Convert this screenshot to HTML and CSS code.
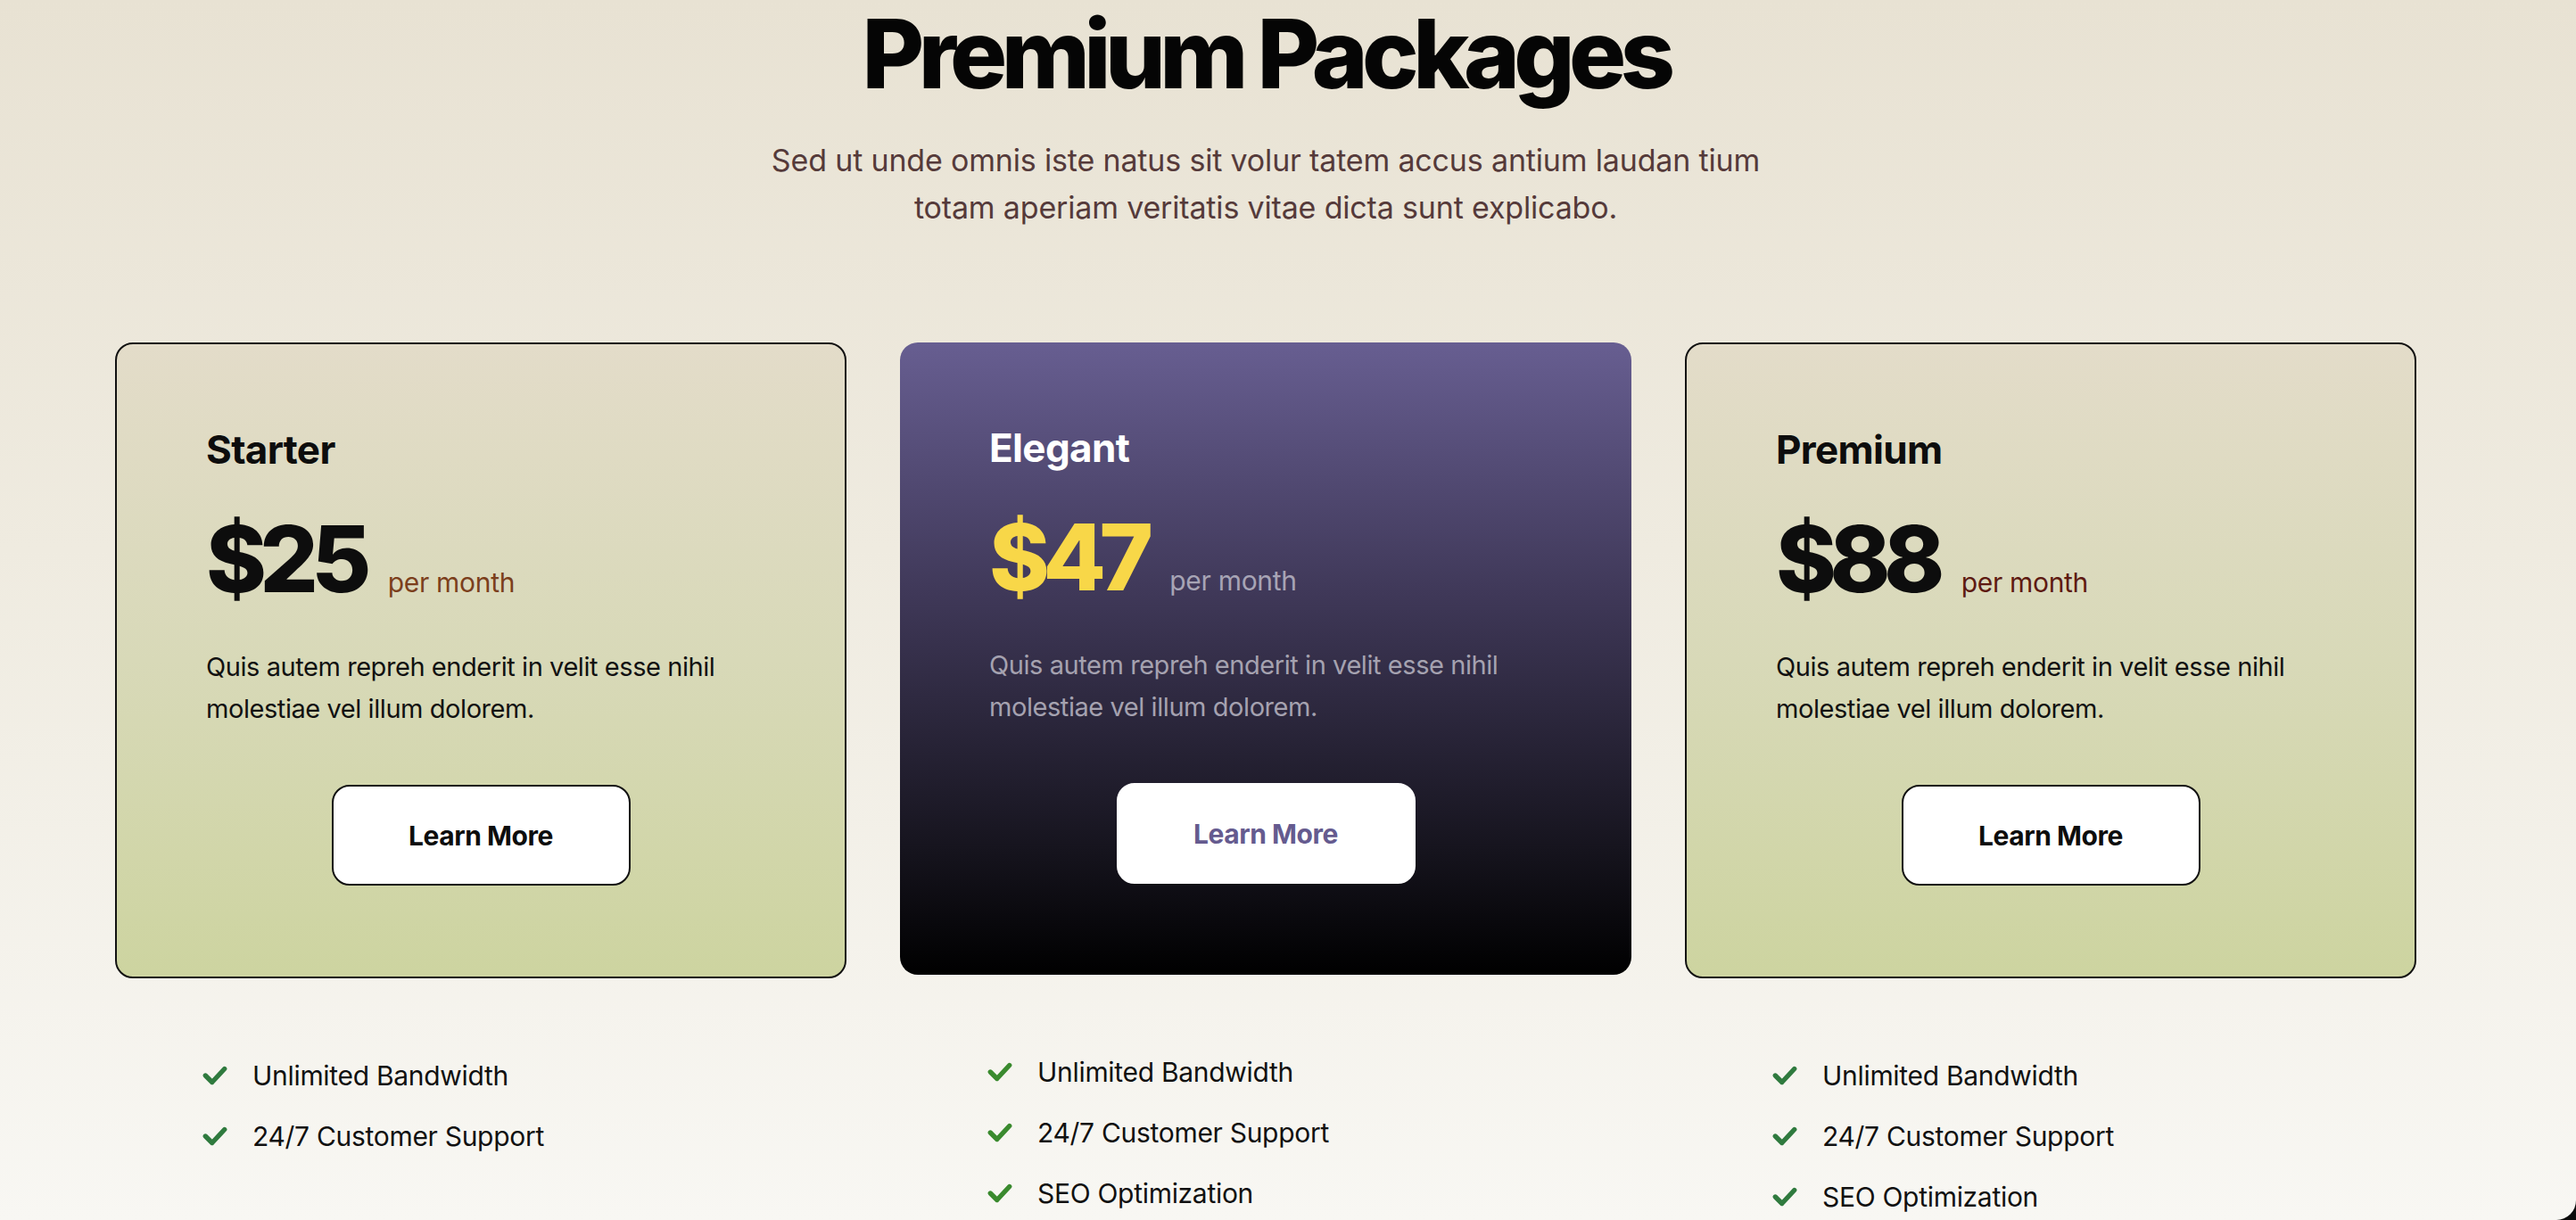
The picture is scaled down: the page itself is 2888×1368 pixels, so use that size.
FILE: index.html
```html
<!DOCTYPE html>
<html lang="en">
<head>
<meta charset="utf-8">
<title>Premium Packages</title>
<link rel="stylesheet" href="styles.css">
</head>
<body>
<main class="page">
  <header class="intro">
    <h1 class="intro__title">Premium Packages</h1>
    <p class="intro__text">Sed ut unde omnis iste natus sit volur tatem accus antium laudan tium totam aperiam veritatis vitae dicta sunt explicabo.</p>
  </header>

  <section class="plans">
    <div class="plan">
      <article class="card card--light">
        <h2 class="card__name">Starter</h2>
        <div class="card__price">
          <span class="card__amount">$25</span>
          <span class="card__period card__period--brown">per month</span>
        </div>
        <p class="card__desc">Quis autem repreh enderit in velit esse nihil molestiae vel illum dolorem.</p>
        <a class="card__btn" href="#">Learn More</a>
      </article>
      <ul class="features">
        <li class="features__item"><svg class="features__icon" viewBox="0 0 28 22"><polyline points="4,11 11,18 24,4"/></svg>Unlimited Bandwidth</li>
        <li class="features__item"><svg class="features__icon" viewBox="0 0 28 22"><polyline points="4,11 11,18 24,4"/></svg>24/7 Customer Support</li>
      </ul>
    </div>

    <div class="plan">
      <article class="card card--dark">
        <h2 class="card__name">Elegant</h2>
        <div class="card__price">
          <span class="card__amount">$47</span>
          <span class="card__period">per month</span>
        </div>
        <p class="card__desc">Quis autem repreh enderit in velit esse nihil molestiae vel illum dolorem.</p>
        <a class="card__btn" href="#">Learn More</a>
      </article>
      <ul class="features">
        <li class="features__item"><svg class="features__icon features__icon--bright" viewBox="0 0 28 22"><polyline points="4,11 11,18 24,4"/></svg>Unlimited Bandwidth</li>
        <li class="features__item"><svg class="features__icon features__icon--bright" viewBox="0 0 28 22"><polyline points="4,11 11,18 24,4"/></svg>24/7 Customer Support</li>
        <li class="features__item"><svg class="features__icon features__icon--bright" viewBox="0 0 28 22"><polyline points="4,11 11,18 24,4"/></svg>SEO Optimization</li>
      </ul>
    </div>

    <div class="plan">
      <article class="card card--light">
        <h2 class="card__name">Premium</h2>
        <div class="card__price">
          <span class="card__amount">$88</span>
          <span class="card__period card__period--red">per month</span>
        </div>
        <p class="card__desc">Quis autem repreh enderit in velit esse nihil molestiae vel illum dolorem.</p>
        <a class="card__btn" href="#">Learn More</a>
      </article>
      <ul class="features">
        <li class="features__item"><svg class="features__icon" viewBox="0 0 28 22"><polyline points="4,11 11,18 24,4"/></svg>Unlimited Bandwidth</li>
        <li class="features__item"><svg class="features__icon" viewBox="0 0 28 22"><polyline points="4,11 11,18 24,4"/></svg>24/7 Customer Support</li>
        <li class="features__item"><svg class="features__icon" viewBox="0 0 28 22"><polyline points="4,11 11,18 24,4"/></svg>SEO Optimization</li>
      </ul>
    </div>
  </section>
</main>
</body>
</html>
```

FILE: styles.css
```css
* { box-sizing: border-box; }

html {
  margin: 0;
  height: 100%;
  background: #0b0b0b;
}

body {
  margin: 0;
  height: 1368px;
  overflow: hidden;
  font-family: Inter, "Noto Sans", Arial, sans-serif;
  color: #0d0d0d;
  background: linear-gradient(180deg, #e8e2d3 0%, #efebe0 45%, #f8f7f3 100%);
  border-bottom-right-radius: 22px;
}

.page {
  padding: 6px 0 0 129px;
}

.intro {
  width: 2580px;
  display: flex;
  flex-direction: column;
  align-items: center;
  text-align: center;
}

.intro__title {
  margin: 0;
  font-size: 107px;
  line-height: 108px;
  font-weight: 800;
  letter-spacing: -0.062em;
  color: #050505;
}

.intro__text {
  margin: 39px 0 0;
  max-width: 1140px;
  font-size: 34px;
  line-height: 53px;
  color: #553a3a;
  letter-spacing: -0.005em;
}

.plans {
  margin-top: 125px;
  display: grid;
  grid-template-columns: repeat(3, 820px);
  column-gap: 60px;
  align-items: start;
}

.card {
  display: flex;
  flex-direction: column;
  padding: 93px 100px 102px;
  border-radius: 20px;
}

.card--light {
  border: 2px solid #111;
  background: linear-gradient(180deg, #e3dcc9 0%, #d8d9b8 50%, #cdd4a0 100%);
}

.card--dark {
  border: 0;
  background: linear-gradient(180deg, #675e91 0%, #3f3858 40%, #16141e 80%, #000 100%);
  color: #fff;
}

.card__name {
  margin: 0;
  font-size: 44px;
  line-height: 50px;
  font-weight: 700;
  letter-spacing: -0.015em;
}

.card__price {
  margin-top: 46px;
  display: flex;
  align-items: baseline;
  gap: 26px;
}

.card__amount {
  font-size: 103px;
  line-height: 104px;
  font-weight: 800;
  letter-spacing: -0.075em;
}

.card--dark .card__amount { color: #f8d748; }

.card__period {
  font-size: 30px;
  line-height: 36px;
  color: #a7a4b5;
  letter-spacing: -0.01em;
}

.card__period--brown { color: #7b3f1c; }
.card__period--red { color: #5e1a12; }

.card__desc {
  margin: 45px -40px 0 0;
  font-size: 29px;
  line-height: 47px;
  letter-spacing: -0.015em;
  color: #111;
}

.card--dark .card__desc { color: #a5a2b0; }

.card__btn {
  align-self: center;
  margin-top: 62px;
  width: 335px;
  height: 113px;
  display: flex;
  align-items: center;
  justify-content: center;
  background: #fff;
  border: 2px solid #111;
  border-radius: 20px;
  font-size: 30px;
  font-weight: 700;
  letter-spacing: -0.015em;
  color: #0d0d0d;
  text-decoration: none;
}

.card--dark .card__btn {
  border-color: #fff;
  color: #655b8f;
}

.features {
  list-style: none;
  margin: 75px 0 0;
  padding: 0 0 0 97px;
}

.features__item {
  display: flex;
  align-items: center;
  gap: 27px;
  height: 68px;
  font-size: 30px;
  letter-spacing: -0.01em;
  color: #111;
}

.features__icon {
  width: 30px;
  height: 24px;
  flex: none;
  fill: none;
  stroke: #2f7a3e;
  stroke-width: 5;
  stroke-linecap: round;
  stroke-linejoin: round;
}

.features__icon--bright { stroke: #3a8a2e; }
```
